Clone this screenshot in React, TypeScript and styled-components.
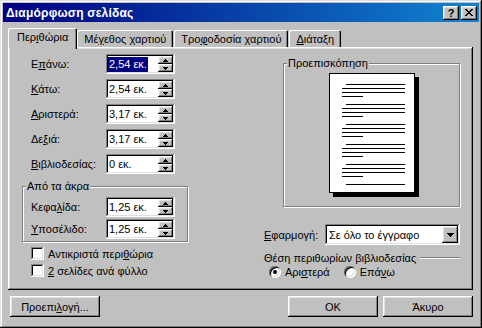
import React from "react"
import styled, { createGlobalStyle, css } from "styled-components"

const GlobalStyle = createGlobalStyle`
    * { box-sizing: border-box; }
    html, body {
        margin: 0;
        padding: 0;
        background: #c0c0c0;
    }
    body {
        font-family: "Liberation Sans", Arial, sans-serif;
        font-size: 11px;
        color: #000;
    }
`

const raised = css`
    box-shadow: inset -1px -1px #000, inset 1px 1px #fff, inset -2px -2px #808080, inset 2px 2px #dfdfdf;
`

const sunken = css`
    box-shadow: inset -1px -1px #fff, inset 1px 1px #808080, inset -2px -2px #dfdfdf, inset 2px 2px #000;
`

const Key = styled.span`
    text-decoration: underline;
    text-underline-offset: 1px;
`

/*___Window___*/

const Window = styled.div`
    width: 482px;
    height: 328px;
    padding: 3px;
    display: flex;
    flex-direction: column;
    background: #c0c0c0;
    box-shadow: inset -1px -1px #000, inset 1px 1px #dfdfdf, inset -2px -2px #808080, inset 2px 2px #fff;
`

const TitleBar = styled.div`
    height: 19px;
    display: flex;
    align-items: center;
    padding: 0 2px 0 3px;
    background: linear-gradient(to right, #000080, #1084d0);
    color: #fff;
    font-weight: bold;
    font-size: 12px;
`

const TitleText = styled.span`
    flex: 1;
    letter-spacing: 0.2px;
`

const TitleButton = styled.div`
    width: 16px;
    height: 14px;
    display: flex;
    align-items: center;
    justify-content: center;
    background: #c0c0c0;
    color: #000;
    font-size: 11px;
    font-weight: bold;
    ${raised}

    & + & {
        margin-left: 2px;
    }
`

const CloseIcon = () => (
    <svg width="8" height="7" viewBox="0 0 8 7" shapeRendering="crispEdges">
        <path d="M0 0h2v1h-2zM6 0h2v1h-2zM1 1h2v1h-2zM5 1h2v1h-2zM2 2h4v1h-4zM3 3h2v1h-2zM2 4h4v1h-4zM1 5h2v1h-2zM5 5h2v1h-2zM0 6h2v1h-2zM6 6h2v1h-2z" fill="#000" />
    </svg>
)

const Body = styled.div`
    flex: 1;
    display: flex;
    flex-direction: column;
    padding: 6px 6px 0 5px;
`

/*___Tabs___*/

const TabStrip = styled.div`
    height: 19px;
    display: flex;
    align-items: flex-end;
    gap: 1px;
    padding-left: 2px;
    position: relative;
    z-index: 1;
`

const Tab = styled.div<{ $active?: boolean }>`
    height: 17px;
    padding: 0 7px;
    display: flex;
    align-items: center;
    background: #c0c0c0;
    border-radius: 2px 2px 0 0;
    box-shadow: inset 1px 1px #fff, inset -1px 0 #000, inset -2px 0 #808080;
    white-space: nowrap;

    ${p => p.$active && css`
        height: 21px;
        margin: 0 -1px -2px -2px;
        padding: 0 9px 3px;
    `}
`

const Panel = styled.div`
    height: 243px;
    display: grid;
    grid-template-columns: 242px 196px;
    padding: 7px 0 0 14px;
    box-shadow: inset -1px -1px #000, inset 1px 1px #fff, inset -2px -2px #808080, inset 2px 2px #dfdfdf;
`

/*___Group box___*/

const GroupBox = styled.div<{ $width: number; $height?: number; $top: number; $left?: number }>`
    width: ${p => p.$width}px;
    height: ${p => (p.$height ? `${p.$height}px` : "auto")};
    margin: ${p => p.$top}px 0 0 ${p => p.$left ?? 0}px;
    display: flex;
    flex-direction: column;
    align-items: flex-start;
    border: 1px solid #808080;
    box-shadow: inset 1px 1px #fff, 1px 1px #fff;
`

const GroupTitle = styled.span`
    margin: -7px 0 0 3px;
    padding: 0 1px;
    line-height: 13px;
    background: #c0c0c0;
`

/*___Left column___*/

const Column = styled.div`
    display: flex;
    flex-direction: column;
    align-items: flex-start;
`

const SpinRow = styled.div<{ $gap: number }>`
    height: 20px;
    display: flex;
    align-items: center;
    margin-bottom: ${p => p.$gap}px;
`

const FieldLabel = styled.span`
    width: 75px;
    margin-left: 9px;
`

const Field = styled.div`
    width: 69px;
    height: 20px;
    padding: 2px;
    display: flex;
    align-items: center;
    background: #fff;
    ${sunken}
`

const FieldValue = styled.span<{ $selected?: boolean }>`
    line-height: 15px;
    padding: 0 1px;
    white-space: nowrap;

    ${p => p.$selected && css`
        background: #000080;
        color: #fff;
    `}
`

const Spinner = styled.div`
    width: 15px;
    height: 16px;
    margin-left: auto;
    display: flex;
    flex-direction: column;
`

const SpinButton = styled.div`
    flex: 1;
    display: flex;
    align-items: center;
    justify-content: center;
    background: #c0c0c0;
    ${raised}
`

const SpinArrow = ({ up }: { up?: boolean }) => (
    <svg width="5" height="3" viewBox="0 0 5 3" shapeRendering="crispEdges">
        <path d={up ? "M2 0h1v1h-1zM1 1h3v1h-3zM0 2h5v1h-5z" : "M0 0h5v1h-5zM1 1h3v1h-3zM2 2h1v1h-1z"} fill="#000" />
    </svg>
)

const SpinField = ({ value, selected }: { value: string; selected?: boolean }) => (
    <Field>
        <FieldValue $selected={selected}>{value}</FieldValue>
        <Spinner>
            <SpinButton><SpinArrow up /></SpinButton>
            <SpinButton><SpinArrow /></SpinButton>
        </Spinner>
    </Field>
)

const GroupRows = styled.div`
    display: flex;
    flex-direction: column;
    gap: 2px;
    padding: 4px 0 2px 8px;
`

const GroupLabel = styled.span`
    width: 75px;
`

const CheckRow = styled.label<{ $first?: boolean }>`
    height: 17px;
    display: flex;
    align-items: center;
    gap: 4px;
    padding-left: 9px;
    margin-top: ${p => (p.$first ? 3 : 0)}px;
`

const CheckBox = styled.span`
    width: 13px;
    height: 13px;
    background: #fff;
    ${sunken}
`

/*___Right column___*/

const PageWrap = styled.div`
    display: flex;
    margin: 3px 0 0 45px;
`

const PageThumb = () => {
    const groups = [11, 31, 51, 71, 91]
    return (
        <svg width="91" height="125" viewBox="0 0 91 125" shapeRendering="crispEdges">
            <rect x="4" y="4" width="86" height="120" fill="#000" />
            <rect x="0.5" y="0.5" width="85" height="119" fill="#fff" stroke="#000" strokeWidth="1" />
            {groups.map(y => (
                <g key={y} fill="#000">
                    <rect x="17" y={y} width="59" height="1" />
                    <rect x="13" y={y + 4} width="63" height="1" />
                    <rect x="13" y={y + 8} width="63" height="1" />
                    <rect x="13" y={y + 12} width="21" height="1" />
                </g>
            ))}
            <rect x="17" y="111" width="59" height="1" fill="#000" />
        </svg>
    )
}

const ApplyRow = styled.div`
    width: 100%;
    height: 21px;
    margin-top: 17px;
    display: flex;
    align-items: center;
`

const ApplyLabel = styled.span`
    width: 61px;
`

const Combo = styled.div`
    flex: 1;
    height: 21px;
    padding: 2px;
    display: flex;
    align-items: center;
    background: #fff;
    ${sunken}
`

const ComboText = styled.span`
    padding-left: 2px;
    flex: 1;
`

const ComboButton = styled.div`
    width: 16px;
    height: 17px;
    display: flex;
    align-items: center;
    justify-content: center;
    background: #c0c0c0;
    ${raised}
`

const SectionHeader = styled.div`
    width: 100%;
    margin-top: 6px;
    height: 13px;
    display: flex;
    align-items: center;
    gap: 4px;
`

const SectionRule = styled.span`
    flex: 1;
    height: 2px;
    border-top: 1px solid #808080;
    border-bottom: 1px solid #fff;
`

const RadioRow = styled.div`
    height: 16px;
    display: flex;
    align-items: center;
    padding-left: 5px;
    gap: 14px;
`

const RadioOption = styled.label`
    display: flex;
    align-items: center;
    gap: 4px;
`

const Radio = styled.span<{ $checked?: boolean }>`
    width: 12px;
    height: 12px;
    border-radius: 50%;
    display: flex;
    align-items: center;
    justify-content: center;
    background: #fff;
    box-shadow: inset 1px 1px #808080, inset -1px -1px #fff, inset 2px 2px #000, inset -2px -2px #dfdfdf;

    &::after {
        content: "";
        width: 4px;
        height: 4px;
        border-radius: 50%;
        background: ${p => (p.$checked ? "#000" : "transparent")};
    }
`

/*___Buttons___*/

const ButtonRow = styled.div`
    margin-top: 6px;
    display: flex;
    padding-left: 2px;
    gap: 5px;
`

const Spacer = styled.span`
    flex: 1;
`

const Button = styled.div`
    width: 90px;
    height: 21px;
    display: flex;
    align-items: center;
    justify-content: center;
    background: #c0c0c0;
    ${raised}
`

const margins = [
    { label: <>Ε<Key>π</Key>άνω:</>, value: "2,54 εκ.", selected: true },
    { label: <><Key>Κ</Key>άτω:</>, value: "2,54 εκ." },
    { label: <><Key>Α</Key>ριστερά:</>, value: "3,17 εκ." },
    { label: <>Δε<Key>ξ</Key>ιά:</>, value: "3,17 εκ." },
    { label: <><Key>Β</Key>ιβλιοδεσίας:</>, value: "0 εκ." },
]

export default function App() {
    return (
        <>
            <GlobalStyle />
            <Window>
                <TitleBar>
                    <TitleText>Διαμόρφωση σελίδας</TitleText>
                    <TitleButton>?</TitleButton>
                    <TitleButton><CloseIcon /></TitleButton>
                </TitleBar>
                <Body>
                    <TabStrip>
                        <Tab $active>Περ<Key>ι</Key>θώρια</Tab>
                        <Tab>Μέ<Key>γ</Key>εθος χαρτιού</Tab>
                        <Tab>Τρο<Key>φ</Key>οδοσία χαρτιού</Tab>
                        <Tab><Key>Δ</Key>ιάταξη</Tab>
                    </TabStrip>
                    <Panel>
                        <Column>
                            {margins.map((m, i) => (
                                <SpinRow key={i} $gap={5}>
                                    <FieldLabel>{m.label}</FieldLabel>
                                    <SpinField value={m.value} selected={m.selected} />
                                </SpinRow>
                            ))}
                            <GroupBox $width={166} $top={7}>
                                <GroupTitle>Από τα άκρα</GroupTitle>
                                <GroupRows>
                                    <SpinRow $gap={0}>
                                        <GroupLabel>Κεφα<Key>λ</Key>ίδα:</GroupLabel>
                                        <SpinField value="1,25 εκ." />
                                    </SpinRow>
                                    <SpinRow $gap={0}>
                                        <GroupLabel><Key>Υ</Key>ποσέλιδο:</GroupLabel>
                                        <SpinField value="1,25 εκ." />
                                    </SpinRow>
                                </GroupRows>
                            </GroupBox>
                            <CheckRow $first>
                                <CheckBox />
                                <span>Αντικριστά περι<Key>θ</Key>ώρια</span>
                            </CheckRow>
                            <CheckRow>
                                <CheckBox />
                                <span><Key>2</Key> σελίδες ανά φύλλο</span>
                            </CheckRow>
                        </Column>
                        <Column>
                            <GroupBox $width={177} $height={144} $top={9} $left={19}>
                                <GroupTitle>Προεπισκόπηση</GroupTitle>
                                <PageWrap>
                                    <PageThumb />
                                </PageWrap>
                            </GroupBox>
                            <ApplyRow>
                                <ApplyLabel><Key>Ε</Key>φαρμογή:</ApplyLabel>
                                <Combo>
                                    <ComboText>Σε όλο το έγγραφο</ComboText>
                                    <ComboButton>
                                        <svg width="7" height="4" viewBox="0 0 7 4" shapeRendering="crispEdges">
                                            <path d="M0 0h7v1h-7zM1 1h5v1h-5zM2 2h3v1h-3zM3 3h1v1h-1z" fill="#000" />
                                        </svg>
                                    </ComboButton>
                                </Combo>
                            </ApplyRow>
                            <SectionHeader>
                                <span>Θέση περιθωρίων βιβλιοδεσίας</span>
                                <SectionRule />
                            </SectionHeader>
                            <RadioRow>
                                <RadioOption>
                                    <Radio $checked />
                                    <span>Αρι<Key>σ</Key>τερά</span>
                                </RadioOption>
                                <RadioOption>
                                    <Radio />
                                    <span>Επά<Key>ν</Key>ω</span>
                                </RadioOption>
                            </RadioRow>
                        </Column>
                    </Panel>
                    <ButtonRow>
                        <Button>Προεπι<Key>λ</Key>ογή...</Button>
                        <Spacer />
                        <Button>OK</Button>
                        <Button>Άκυρο</Button>
                    </ButtonRow>
                </Body>
            </Window>
        </>
    )
}
